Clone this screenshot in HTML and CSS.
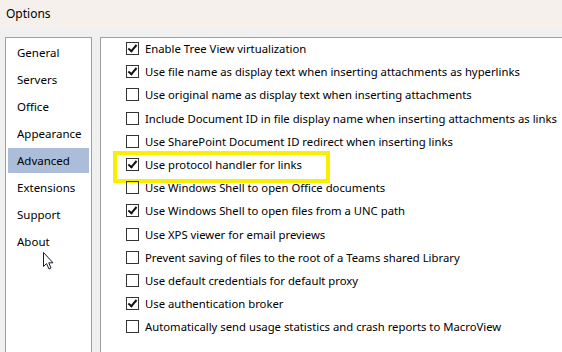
FILE: index.html
```html
<!DOCTYPE html>
<html lang="en">
<head>
    <meta charset="UTF-8">
    <meta name="viewport" content="width=device-width, initial-scale=1.0">
    <title>Options</title>
    <link rel="stylesheet" href="styles.css">
</head>
<body>
    <div class="titlebar">Options</div>
    <div class="main">
        <ul class="nav">
            <li>General</li>
            <li>Servers</li>
            <li>Office</li>
            <li>Appearance</li>
            <li class="selected">Advanced</li>
            <li>Extensions</li>
            <li>Support</li>
            <li class="about">About
                <svg class="cursor" width="14" height="19" viewBox="0 0 14 19">
                    <path d="M1.5 1.5 L1.5 15.5 L4.5 12.5 L7 18 L9 17 L6.8 11.8 L11 11.8 Z" fill="#fff" stroke="#1a1a2a" stroke-width="1" stroke-linejoin="round"/>
                </svg>
            </li>
        </ul>
        <div class="panel">
            <label class="opt"><span class="box checked"></span>Enable Tree View virtualization</label>
            <label class="opt"><span class="box checked"></span>Use file name as display text when inserting attachments as hyperlinks</label>
            <label class="opt"><span class="box"></span>Use original name as display text when inserting attachments</label>
            <label class="opt"><span class="box"></span>Include Document ID in file display name when inserting attachments as links</label>
            <label class="opt"><span class="box"></span>Use SharePoint Document ID redirect when inserting links</label>
            <label class="opt marked"><span class="box checked"></span>Use protocol handler for links</label>
            <label class="opt"><span class="box"></span>Use Windows Shell to open Office documents</label>
            <label class="opt"><span class="box checked"></span>Use Windows Shell to open files from a UNC path</label>
            <label class="opt"><span class="box"></span>Use XPS viewer for email previews</label>
            <label class="opt"><span class="box"></span>Prevent saving of files to the root of a Teams shared Library</label>
            <label class="opt"><span class="box"></span>Use default credentials for default proxy</label>
            <label class="opt"><span class="box checked"></span>Use authentication broker</label>
            <label class="opt"><span class="box"></span>Automatically send usage statistics and crash reports to MacroView</label>
        </div>
    </div>
</body>
</html>
```

FILE: styles.css
```css
html, body {
    margin: 0;
    height: 100%;
    overflow: hidden;
}
body {
    font-family: "Noto Sans", "Open Sans", sans-serif;
    font-size: 11.3px;
    color: #000;
    background-color: #f0f0f0;
    display: flex;
    flex-direction: column;
}
.titlebar {
    height: 28px;
    line-height: 28px;
    padding-left: 6px;
    background-color: #f6f0ec;
    font-size: 12px;
}
.main {
    flex: 1;
    display: flex;
    padding: 9px 0 0 5px;
    gap: 8px;
}
.nav {
    list-style: none;
    margin: 0;
    padding: 2px 2px 0 2px;
    width: 81px;
    flex-shrink: 0;
    background-color: #fff;
    border: 1px solid #a0a0a0;
    border-bottom: none;
}
.nav li {
    height: 25px;
    line-height: 25px;
    padding-left: 9px;
    margin-bottom: 2px;
    font-size: 11.5px;
}
.nav li.selected {
    background-color: #abbdd9;
}
.about {
    position: relative;
}
.cursor {
    position: absolute;
    left: 34px;
    top: 22px;
}
.panel {
    flex: 1;
    min-width: 0;
    overflow: hidden;
    background-color: #fff;
    border: 1px solid #a0a0a0;
    border-right: none;
    border-bottom: none;
    padding: 0 0 0 25px;
    display: flex;
    flex-direction: column;
}
.opt {
    display: flex;
    align-items: center;
    height: 23.2px;
    flex-shrink: 0;
    white-space: nowrap;
    position: relative;
}
.opt:first-child {
    margin-top: -1px;
}
.box {
    width: 11px;
    height: 11px;
    border: 1px solid #333;
    margin-right: 6px;
    flex-shrink: 0;
    position: relative;
}
.box.checked::after {
    content: "";
    position: absolute;
    left: 3px;
    top: 0px;
    width: 3px;
    height: 7px;
    border: solid #111;
    border-width: 0 2px 2px 0;
    transform: rotate(40deg);
}
.marked::before {
    content: "";
    position: absolute;
    left: -13px;
    top: -2px;
    width: 209px;
    height: 24px;
    border: 4px solid #f8f000;
}
```
